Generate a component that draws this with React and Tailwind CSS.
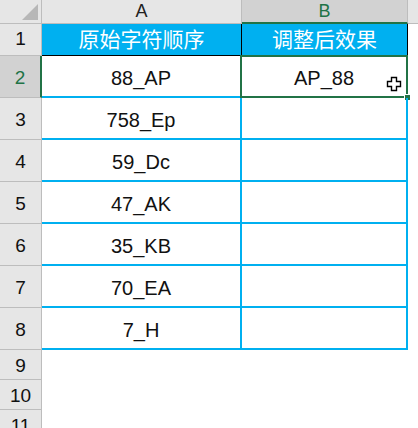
import React from 'react';

const rows = [
  { n: 2, a: '88_AP', b: 'AP_88' },
  { n: 3, a: '758_Ep', b: '' },
  { n: 4, a: '59_Dc', b: '' },
  { n: 5, a: '47_AK', b: '' },
  { n: 6, a: '35_KB', b: '' },
  { n: 7, a: '70_EA', b: '' },
  { n: 8, a: '7_H', b: '' },
];

const font = { fontFamily: '"Liberation Sans", "Noto Sans CJK SC", sans-serif' };

const FatCross = () => (
  <svg width="16" height="16" viewBox="0 0 16 16" className="absolute right-[4px] bottom-[4px]">
    <path d="M5.5 1.5h5v4h4v5h-4v4h-5v-4h-4v-5h4z" fill="#fff" stroke="#000" strokeWidth="1.4" />
  </svg>
);

const App = () => {
  return (
    <div className="w-[418px] h-[428px] overflow-hidden bg-white text-[#111]" style={font}>
      {/* column headers */}
      <div className="flex h-[24px]">
        <div className="relative w-[42px] bg-[#e6e6e6] border-r border-b border-[#bdbdbd]">
          <div className="absolute right-[3px] bottom-[3px] w-0 h-0 border-l-[16px] border-l-transparent border-b-[16px] border-b-[#b7b7b7]" />
        </div>
        <div className="w-[200px] bg-[#e6e6e6] border-r border-b border-[#bdbdbd] flex items-center justify-center text-[18px] text-[#222]">A</div>
        <div className="w-[166px] bg-[#d2d2d2] border-r border-r-[#bdbdbd] border-b-2 border-b-[#217346] flex items-center justify-center text-[18px] text-[#217346]">B</div>
        <div className="flex-1 bg-[#e6e6e6] border-b border-b-[#bdbdbd]" />
      </div>

      {/* row 1 */}
      <div className="flex h-[32px]">
        <div className="w-[42px] bg-[#e6e6e6] border-r border-b border-[#bdbdbd] flex items-center justify-center text-[19px]">1</div>
        <div className="w-[200px] bg-[#00b0f0] border-r border-b border-black flex items-center justify-center text-[21px] text-white">原始字符顺序</div>
        <div className="w-[166px] bg-[#00b0f0] border-r border-b border-black flex items-center justify-center text-[21px] text-white">调整后效果</div>
        <div className="flex-1" />
      </div>

      {/* rows 2-8 */}
      {rows.map((r) => (
        <div key={r.n} className="flex h-[42px]">
          {r.n === 2 ? (
            <div className="w-[42px] bg-[#d2d2d2] border-b border-b-[#bdbdbd] border-r-2 border-r-[#217346] flex items-center justify-center text-[19px] text-[#217346] pt-1">{r.n}</div>
          ) : (
            <div className="w-[42px] bg-[#e6e6e6] border-r border-b border-[#bdbdbd] flex items-center justify-center text-[19px] pt-1">{r.n}</div>
          )}
          <div className="w-[200px] border-r-2 border-b-2 border-r-[#00b0f0] border-b-[#00b0f0] flex items-center justify-center text-[20px] pt-1">{r.a}</div>
          <div className="relative w-[166px] border-r-2 border-b-2 border-r-[#00b0f0] border-b-[#00b0f0] flex items-center justify-center text-[20px] pt-1">
            {r.b}
            {r.n === 2 && (
              <>
                <div className="absolute left-[-2px] top-[-1px] right-[-2px] bottom-[-2px] border-2 border-[#217346]" />
                <div className="absolute right-[-5px] bottom-[-5px] w-[7px] h-[7px] bg-[#217346] border border-white" />
                <FatCross />
              </>
            )}
          </div>
          <div className="flex-1" />
        </div>
      ))}

      {/* rows 9-11 */}
      {[9, 10, 11].map((n) => (
        <div key={n} className="flex h-[30px]">
          <div className="w-[42px] bg-[#e6e6e6] border-r border-b border-[#bdbdbd] flex items-center justify-center text-[19px] pt-1">{n}</div>
          <div className="flex-1" />
        </div>
      ))}
    </div>
  );
};

export default App;
